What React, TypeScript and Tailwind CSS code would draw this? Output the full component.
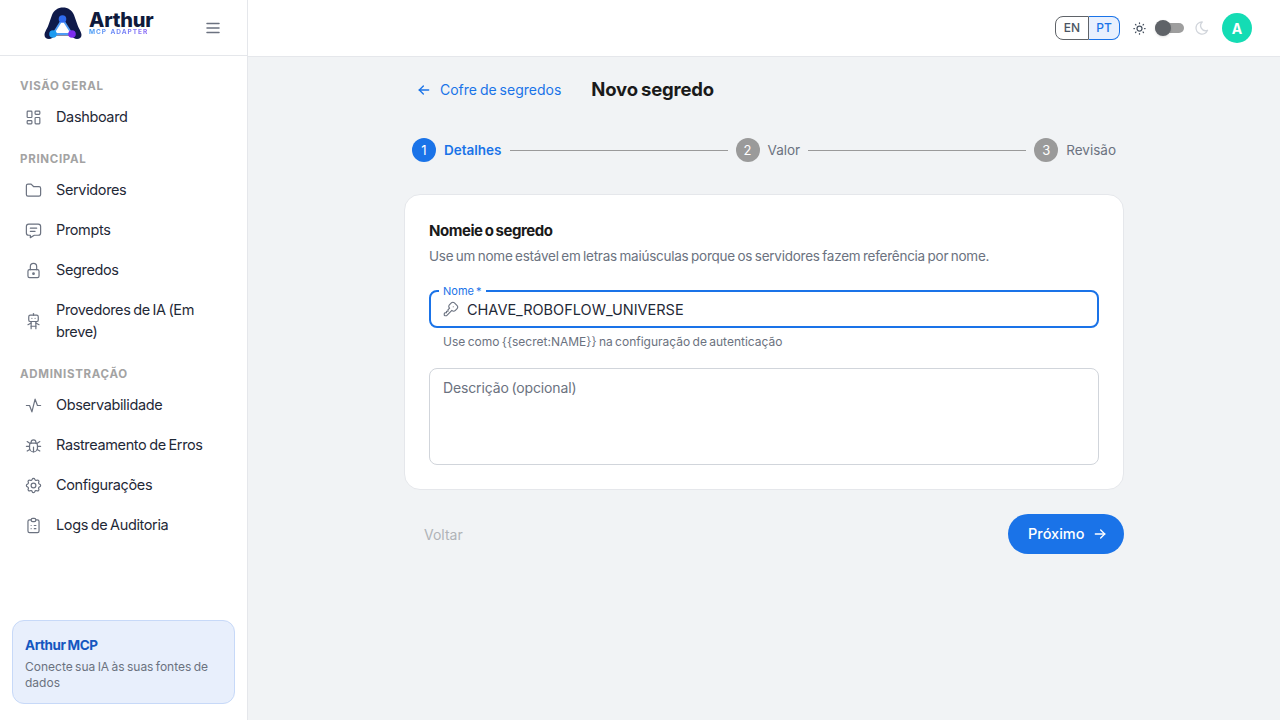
import type { ReactNode } from 'react'
import {
  TbActivity,
  TbArrowLeft,
  TbArrowRight,
  TbBug,
  TbClipboardList,
  TbFolder,
  TbKey,
  TbLayoutDashboard,
  TbLock,
  TbMenu2,
  TbMessage,
  TbMoon,
  TbRobot,
  TbSettings,
  TbSun,
} from 'react-icons/tb'

function SectionLabel({ children }: { children: ReactNode }) {
  return (
    <div className="mt-[12px] flex h-[21px] items-center pl-2 font-bold text-[#a3a3a3] text-[11.5px] uppercase tracking-[0.06em]">
      {children}
    </div>
  )
}

function NavItem({ icon, children }: { icon: ReactNode; children: ReactNode }) {
  return (
    <div className="flex min-h-10 items-center gap-[13px] py-[9px] pl-[12px] text-[#1f2937] text-[14.5px] leading-[22px] tracking-[-0.025em]">
      <span className="shrink-0 text-[#6b7280]">{icon}</span>
      <span>{children}</span>
    </div>
  )
}

function Logo() {
  return (
    <div className="flex items-center gap-[7px] pb-[10px]">
      <svg width="38" height="32" viewBox="0 0 38 32" fill="none">
        <path
          d="M0.500 28C0.500 24.500 3.500 21.500 5 16.500L8 8C10 3 14 0.500 19 0.500C24 0.500 28 3 30 8L33 16.500C34.500 21.500 37.500 24.500 37.500 28C37.500 30.500 35.500 32 33 32C30.500 32 29 30.500 27 28.500H11C9 30.500 7.500 32 5 32C2.500 32 0.500 30.500 0.500 28Z"
          fill="#0f1a4a"
        />
        <path d="M18.500 12L9 27H28Z" fill="#ffffff" stroke="#4f9bf5" strokeWidth="1.800" strokeLinejoin="round" />
        <circle cx="18.500" cy="12" r="3.800" fill="#2f6bf0" />
        <circle cx="9" cy="27" r="3.800" fill="#1d9bf0" />
        <circle cx="28" cy="27" r="3.800" fill="#7c2df0" />
      </svg>
      <div className="flex flex-col pt-[2px]">
        <span className="font-extrabold text-[#0f1a3c] text-[20px] leading-[17px] tracking-[-0.01em]">Arthur</span>
        <span className="bg-gradient-to-r from-[#3b9bf5] to-[#8b5cf6] bg-clip-text font-bold text-[6.500px] text-transparent leading-[7px] tracking-[0.15em] [word-spacing:1px]">
          MCP ADAPTER
        </span>
      </div>
    </div>
  )
}

function Sidebar() {
  return (
    <aside className="flex h-full w-[248px] shrink-0 flex-col border-[#e5e7eb] border-r bg-white">
      <div className="flex h-[56px] shrink-0 items-center border-[#e5e7eb] border-b pr-[25px] pl-[44px]">
        <Logo />
        <TbMenu2 size={18} className="ml-auto text-[#6b7280]" />
      </div>
      <nav className="flex-1 px-3 pt-2">
        <SectionLabel>Visão geral</SectionLabel>
        <NavItem icon={<TbLayoutDashboard size={19} strokeWidth={1.5} />}>Dashboard</NavItem>
        <SectionLabel>Principal</SectionLabel>
        <NavItem icon={<TbFolder size={19} strokeWidth={1.5} />}>Servidores</NavItem>
        <NavItem icon={<TbMessage size={19} strokeWidth={1.5} />}>Prompts</NavItem>
        <NavItem icon={<TbLock size={19} strokeWidth={1.5} />}>Segredos</NavItem>
        <NavItem icon={<TbRobot size={19} strokeWidth={1.5} />}>Provedores de IA (Em breve)</NavItem>
        <SectionLabel>Administração</SectionLabel>
        <NavItem icon={<TbActivity size={19} strokeWidth={1.5} />}>Observabilidade</NavItem>
        <NavItem icon={<TbBug size={19} strokeWidth={1.5} />}>Rastreamento de Erros</NavItem>
        <NavItem icon={<TbSettings size={19} strokeWidth={1.5} />}>Configurações</NavItem>
        <NavItem icon={<TbClipboardList size={19} strokeWidth={1.5} />}>Logs de Auditoria</NavItem>
      </nav>
      <div className="mx-3 mb-4 h-[84px] rounded-xl border border-[#c7d9f8] bg-[#e8effc] px-3 pt-[14px]">
        <div className="font-bold text-[#1557c0] text-[13.5px] leading-5 tracking-[-0.03em]">Arthur MCP</div>
        <div className="mt-[4px] text-[#6b7280] text-[12px] leading-4">Conecte sua IA às suas fontes de dados</div>
      </div>
    </aside>
  )
}

function Header() {
  return (
    <header className="flex h-[57px] shrink-0 items-center justify-end border-[#e5e7eb] border-b bg-white pr-[28px]">
      <div className="flex h-[24px] w-[65px] font-medium text-[12px]">
        <span className="flex w-[34px] items-center justify-center rounded-l-lg border border-[#5f6368] text-[#4b5563]">EN</span>
        <span className="flex w-[31px] items-center justify-center rounded-r-lg border border-[#1a73e8] border-l-0 bg-[#e8f0fe] text-[#1a73e8]">PT</span>
      </div>
      <TbSun size={15} className="ml-[12px] text-[#4b5563]" />
      <div className="relative ml-[8px] h-[10px] w-[29px] rounded-full bg-[#9e9e9e]">
        <span className="-top-[3px] absolute left-0 h-4 w-4 rounded-full bg-[#5f6368] shadow-sm" />
      </div>
      <TbMoon size={16} className="ml-[10px] text-[#d1d5db]" />
      <span className="ml-[12px] flex h-[30px] w-[30px] items-center justify-center rounded-full bg-[#14dcb4] font-bold text-[14px] text-white">A</span>
    </header>
  )
}

function Step({ n, label, active }: { n: number; label: string; active?: boolean }) {
  return (
    <div className="flex shrink-0 items-center gap-2">
      <span className={`flex h-6 w-6 items-center justify-center rounded-full pt-px text-[13px] text-white ${active ? 'bg-[#1a73e8]' : 'bg-[#9a9a9a]'}`}>
        {n}
      </span>
      <span className={`pt-px text-[13.500px] ${active ? 'font-semibold text-[#1a73e8]' : 'text-[#6b7280]'}`}>{label}</span>
    </div>
  )
}

export default function App() {
  return (
    <div className="flex h-[720px] w-[1280px] overflow-hidden bg-[#f1f3f5] font-['Inter',sans-serif] [word-spacing:-1px]">
      <Sidebar />
      <div className="flex min-w-0 flex-1 flex-col">
        <Header />
        <main className="mx-auto w-[720px] pt-[17px]">
          <div className="flex h-[32px] items-center pl-[12px]">
            <TbArrowLeft size={16} className="text-[#1a73e8]" />
            <span className="ml-[8px] pb-[2px] text-[#1a73e8] text-[14px]">Cofre de segredos</span>
            <h1 className="ml-[30px] font-bold text-[#1a1a1a] text-[18.500px] tracking-[-0.01em]">Novo segredo</h1>
          </div>
          <div className="mt-[32px] flex items-center gap-2 px-2">
            <Step n={1} label="Detalhes" active />
            <div className="h-px flex-1 bg-[#9a9a9a]" />
            <Step n={2} label="Valor" />
            <div className="h-px flex-1 bg-[#9a9a9a]" />
            <Step n={3} label="Revisão" />
          </div>
          <section className="mt-[32px] h-[296px] rounded-2xl border border-[#e5e7eb] bg-white px-6 pt-[25px]">
            <h2 className="font-bold text-[#1a1a1a] text-[15px] leading-[22px] tracking-[-0.03em]">Nomeie o segredo</h2>
            <p className="mt-[3px] text-[#6b7280] text-[13.500px] leading-[22px] tracking-[-0.018em]">
              Use um nome estável em letras maiúsculas porque os servidores fazem referência por nome.
            </p>
            <div className="relative mt-[23px] flex h-[38px] items-center rounded-lg border-2 border-[#1a73e8] pl-[11px]">
              <span className="-top-[8px] absolute left-[8px] bg-white px-[4px] text-[#1a73e8] text-[11px] leading-[14px]">Nome *</span>
              <TbKey size={18} strokeWidth={1.5} className="text-[#6b7280]" />
              <span className="ml-[7px] pt-px text-[#1f2937] text-[14.5px]">CHAVE_ROBOFLOW_UNIVERSE</span>
            </div>
            <div className="mt-[5px] pl-[14px] text-[#6b7280] text-[12px] leading-[18px]">
              Use como {'{{secret:NAME}}'} na configuração de autenticação
            </div>
            <div className="mt-[17px] h-[97px] rounded-lg border border-[#d1d5db] px-[13px] pt-[9px] text-[#6b7280] text-[14px] leading-[20px] tracking-[-0.01em]">
              Descrição (opcional)
            </div>
          </section>
          <div className="mt-6 flex items-center justify-between">
            <span className="pl-5 text-[#b0b3b8] text-[14px]">Voltar</span>
            <div className="flex h-10 w-[116px] items-center gap-2 rounded-full bg-[#1a73e8] pl-5 font-medium text-[14.5px] text-white">
              Próximo
              <TbArrowRight size={16} />
            </div>
          </div>
        </main>
      </div>
    </div>
  )
}
